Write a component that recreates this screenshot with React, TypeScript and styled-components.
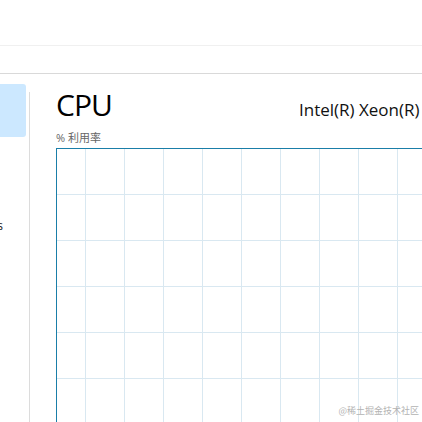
import React from 'react';
import styled, { createGlobalStyle } from 'styled-components';

const GlobalStyle = createGlobalStyle`
    html, body {
        margin: 0;
        padding: 0;
        background: #ffffff;
        overflow: hidden;
    }
    body {
        font-family: "Open Sans", "Noto Sans", "Noto Sans CJK SC", sans-serif;
        color: #000;
    }
`

const Window = styled.div`
    width: 422px;
    height: 422px;
    position: relative;
    overflow: hidden;
    display: flex;
    flex-direction: column;
`

const TitleBar = styled.div`
    height: 45px;
    border-bottom: 1px solid #f0f0f0;
    flex-shrink: 0;
`

const ToolBar = styled.div`
    height: 27px;
    border-bottom: 1px solid #d9d9d9;
    flex-shrink: 0;
`

const Body = styled.div`
    display: flex;
    flex: 1;
    min-height: 0;
`

const Sidebar = styled.nav`
    width: 29px;
    flex-shrink: 0;
    display: flex;
    flex-direction: column;
    padding-top: 10px;
`

const SideItem = styled.div<{ $active?: boolean }>`
    width: 26px;
    height: 53px;
    border-radius: 0 3px 3px 0;
    background: ${p => (p.$active ? '#cce8ff' : 'transparent')};
    display: flex;
    align-items: center;
    justify-content: flex-start;
    overflow: hidden;
`

const SideText = styled.span`
    width: 3px;
    margin-top: 16px;
    overflow: hidden;
    display: flex;
    justify-content: flex-end;
    font-size: 12px;
    white-space: nowrap;
    color: #222;
`

const Divider = styled.div`
    width: 1px;
    margin-top: 18px;
    background: #dcdcdc;
    flex-shrink: 0;
`

const Main = styled.main`
    flex: 1;
    padding: 16px 0 0 26px;
    display: flex;
    flex-direction: column;
    min-width: 0;
`

const Header = styled.div`
    display: flex;
    align-items: baseline;
    white-space: nowrap;
`

const Title = styled.h1`
    margin: 0;
    width: 243px;
    font-size: 30px;
    line-height: 30px;
    letter-spacing: -1px;
    font-weight: 400;
    flex-shrink: 0;
`

const Processor = styled.span`
    font-size: 17px;
    color: #111;
`

const Caption = styled.div`
    margin-top: 10px;
    font-size: 11px;
    line-height: 14px;
    color: #666;
`

const Graph = styled.div`
    margin-top: 3px;
    width: 400px;
    height: 320px;
    flex-shrink: 0;
    border: 1px solid #1a7ea8;
    background-color: #fff;
    background-image:
        linear-gradient(to right, #d9e8f1 1px, transparent 1px),
        linear-gradient(to bottom, #d9e8f1 1px, transparent 1px);
    background-size: 39px 46px;
    background-position: 28px 45px;
`

const Watermark = styled.div`
    position: absolute;
    right: 3px;
    bottom: 5px;
    font-size: 9px;
    color: #b3b3b3;
    font-family: "Noto Sans CJK SC", sans-serif;
`

export default function App() {
    return (
        <>
            <GlobalStyle />
            <Window>
                <TitleBar />
                <ToolBar />
                <Body>
                    <Sidebar>
                        <SideItem $active />
                        <SideItem />
                        <SideItem>
                            <SideText>以太网s</SideText>
                        </SideItem>
                    </Sidebar>
                    <Divider />
                    <Main>
                        <Header>
                            <Title>CPU</Title>
                            <Processor>Intel(R) Xeon(R) CPU E5-2682 v4</Processor>
                        </Header>
                        <Caption>% 利用率</Caption>
                        <Graph />
                    </Main>
                </Body>
                <Watermark>@稀土掘金技术社区</Watermark>
            </Window>
        </>
    );
}
